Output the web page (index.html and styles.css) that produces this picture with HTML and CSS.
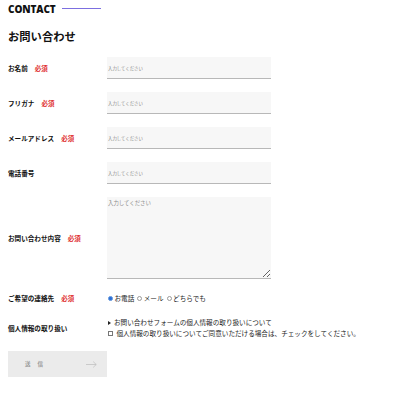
FILE: index.html
```html
<!DOCTYPE html>
<html lang="ja">
<head>
<meta charset="utf-8">
<link rel="stylesheet" href="styles.css">
</head>
<body>
<div class="page">
  <div class="eyebrow"><span class="eyebrow-text">CONTACT</span><span class="eyebrow-line"></span></div>
  <h1 class="title">お問い合わせ</h1>
  <form class="form">
    <div class="row">
      <div class="label">お名前<span class="req">必須</span></div>
      <input class="field" type="text" placeholder="入力してください">
    </div>
    <div class="row">
      <div class="label">フリガナ<span class="req">必須</span></div>
      <input class="field" type="text" placeholder="入力してください">
    </div>
    <div class="row">
      <div class="label">メールアドレス<span class="req">必須</span></div>
      <input class="field" type="text" placeholder="入力してください">
    </div>
    <div class="row">
      <div class="label">電話番号</div>
      <input class="field" type="text" placeholder="入力してください">
    </div>
    <div class="row">
      <div class="label">お問い合わせ内容<span class="req">必須</span></div>
      <textarea class="area" placeholder="入力してください"></textarea>
    </div>
    <div class="row">
      <div class="label">ご希望の連絡先<span class="req">必須</span></div>
      <div class="radios">
        <span class="opt"><span class="radio on"></span>お電話</span>
        <span class="opt"><span class="radio"></span>メール</span>
        <span class="opt"><span class="radio"></span>どちらでも</span>
      </div>
    </div>
    <div class="row">
      <div class="label">個人情報の取り扱い</div>
      <div class="privacy">
        <div class="pline"><span class="tri"></span>お問い合わせフォームの個人情報の取り扱いについて</div>
        <div class="pline"><span class="check"></span>個人情報の取り扱いについてご同意いただける場合は、チェックをしてください。</div>
      </div>
    </div>
    <button class="submit" type="button"><span class="submit-text"><span class="ch">送</span><span class="ch">信</span></span>
      <svg class="arrow" width="11" height="7" viewBox="0 0 11 7"><path d="M0 3.5H10.2M7.2 0.6L10.2 3.5L7.2 6.4" fill="none" stroke="#bcbcbc" stroke-width="0.7"/></svg>
    </button>
  </form>
</div>
</body>
</html>
```

FILE: styles.css
```css
* { box-sizing: border-box; }
html, body { margin: 0; padding: 0; background: #fff; }
body {
  font-family: "Noto Sans CJK JP", "Noto Sans", sans-serif;
  color: #222;
}
.page { padding: 3px 8px 0 8px; }
.eyebrow { display: flex; align-items: center; gap: 6px; height: 12px; }
.eyebrow-text { font-family: "Open Sans", "Noto Sans", sans-serif; font-weight: 800; font-size: 10px; letter-spacing: -0.1px; color: #111; line-height: 12px; }
.eyebrow-line { width: 39px; height: 1px; background: #7c6fe0; margin-top: -1px; }
.title { margin: 14px 0 0 0; font-size: 11.3px; font-weight: 700; line-height: 14px; color: #111; }
.form { margin-top: 14px; display: flex; flex-direction: column; gap: 13px; }
.row { display: flex; align-items: center; }
.label { width: 99px; flex: none; font-size: 6.6px; font-weight: 700; color: #111; display: flex; align-items: center; }
.req { color: #e03030; font-weight: 700; margin-left: 7px; font-size: 6.5px; }
.field {
  width: 164px; height: 22px; border: 0; border-bottom: 1px solid #b8b8b8;
  background: #f7f7f7; padding: 0 0 0 1px; margin: 0; outline: none;
  font-family: inherit; font-size: 4.4px; color: #333;
}
.field::placeholder { color: #8a8a8a; }
.area {
  width: 164px; height: 82px; border: 0; border-bottom: 1px solid #b8b8b8;
  background: #f7f7f7; padding: 2px 1px; margin: 0; outline: none;
  font-family: inherit; font-size: 5.4px; color: #333; resize: vertical; display: block;
}
.area::placeholder { color: #8a8a8a; }
.radios { display: flex; gap: 3px; font-size: 6.6px; line-height: 12px; color: #222; padding-left: 1px; }
.opt { display: flex; align-items: center; gap: 1.5px; }
.radio { width: 5px; height: 5px; border: 0.6px solid #999; border-radius: 50%; display: inline-block; background: #fff; }
.radio.on { border-color: #4a86d8; background: radial-gradient(circle, #2b6fd6 0 1.4px, #fff 1.7px); }
.privacy { display: flex; flex-direction: column; font-size: 6.6px; line-height: 11px; color: #222; }
.pline { display: flex; align-items: center; }
.tri { width: 0; height: 0; border-top: 2px solid transparent; border-bottom: 2px solid transparent; border-left: 3.5px solid #222; margin: 0 3px 0 1px; }
.check { width: 4.5px; height: 4.5px; border: 0.6px solid #777; margin: 0 4px 0 1px; background: #fff; }
.submit {
  margin-top: -1px; width: 99px; height: 26px; border: 0; background: #ebebeb;
  display: flex; align-items: center; justify-content: space-between; padding: 0 10px 0 17px;
  font-family: inherit; cursor: pointer;
}
.submit-text { display: flex; gap: 7px; font-size: 5.5px; color: #9a9a9a; font-weight: 700; }
.arrow { display: block; }
```
